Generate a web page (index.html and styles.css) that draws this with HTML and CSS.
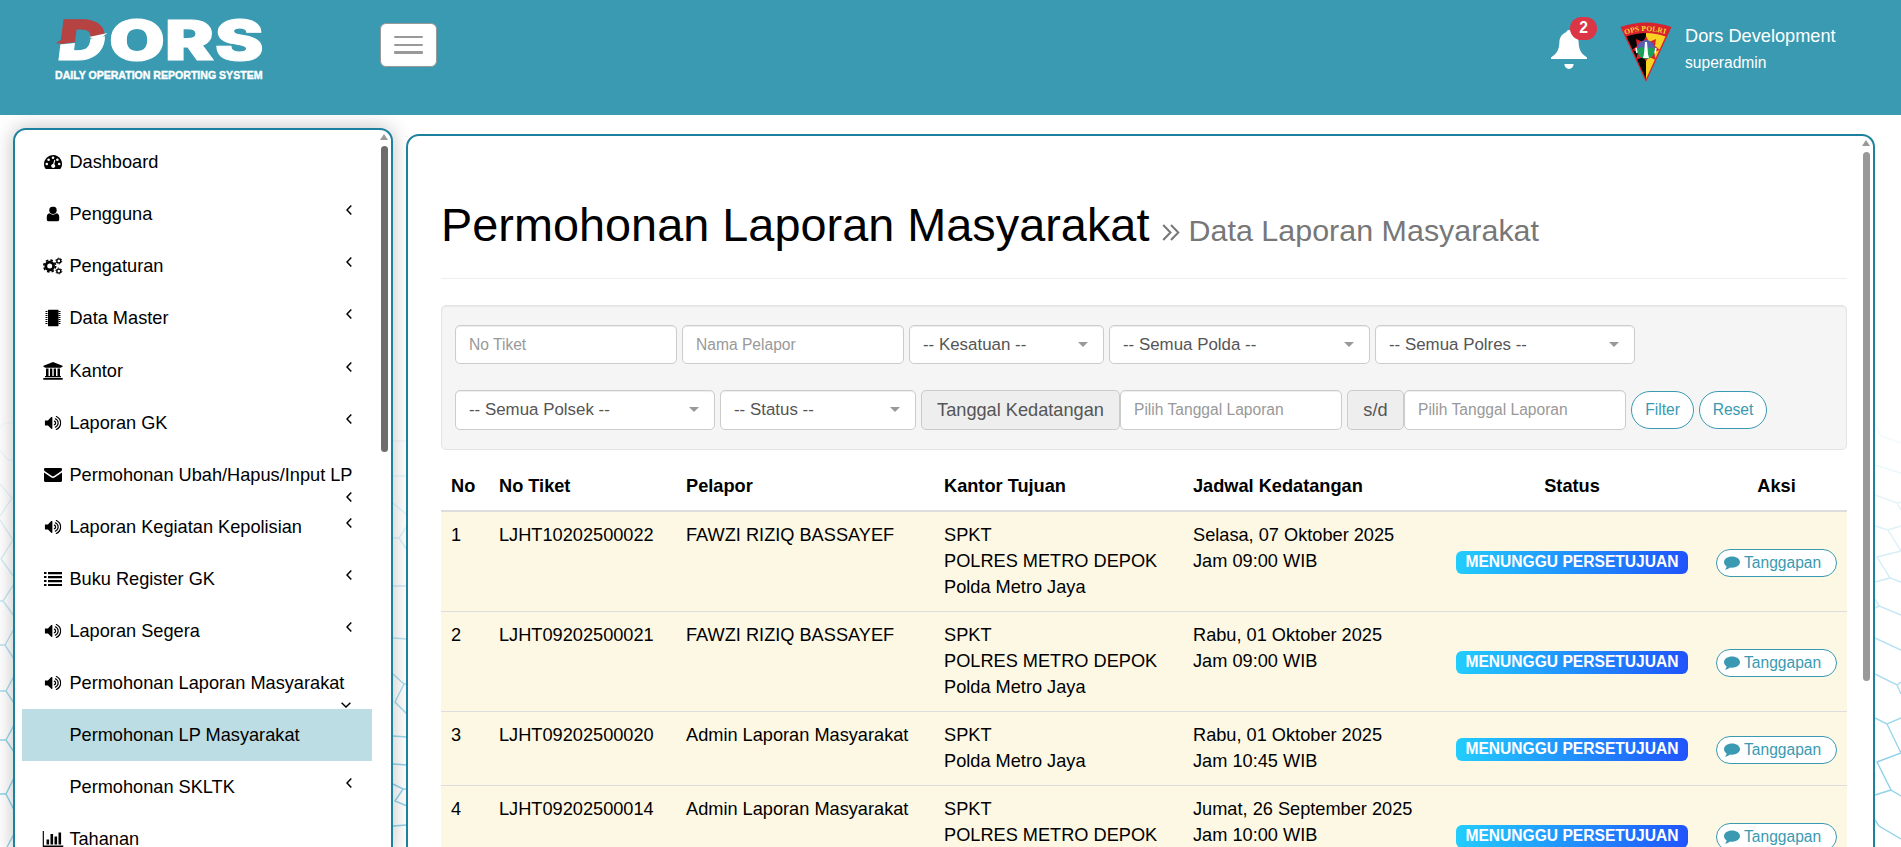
FILE: index.html
```html
<!DOCTYPE html>
<html lang="id">
<head>
<meta charset="utf-8">
<title>DORS - Permohonan Laporan Masyarakat</title>
<link rel="stylesheet" href="styles.css">
</head>
<body>
<svg width="0" height="0" class="defs">
  <symbol id="i-dash" viewBox="0 0 18 14"><path d="M9 0a9 9 0 0 0-9 9c0 1.700.5 3.300 1.300 4.600.2.300.4.400.7.400h14c.3 0 .5-.1.700-.4A9 9 0 0 0 9 0z"/><g fill="#fff"><circle cx="2.800" cy="9" r="1.300"/><circle cx="4.600" cy="4.700" r="1.300"/><circle cx="9" cy="2.800" r="1.300"/><circle cx="13.400" cy="4.700" r="1.300"/><circle cx="15.200" cy="9" r="1.300"/><path d="M10.300 4.800l1 .2-1 4.200a2 2 0 1 1-1.200-.3z"/></g></symbol>
  <symbol id="i-user" viewBox="0 0 13 15"><circle cx="6.500" cy="3.700" r="3.700"/><path d="M3 6.700c-2.200.4-3 2.500-3 5.300C0 14 1 15 2.500 15h8c1.500 0 2.500-1 2.500-3 0-2.800-.8-4.900-3-5.300-2 1.900-5 1.900-7 0z"/></symbol>
  <symbol id="i-gears" viewBox="0 0 20 17"><g fill="none" stroke="#000"><circle cx="6.700" cy="8.500" r="3.900" stroke-width="2.800"/><circle cx="6.700" cy="8.500" r="5.900" stroke-width="1.700" stroke-dasharray="2.500 2.134"/><circle cx="15.800" cy="3.400" r="2" stroke-width="1.400"/><circle cx="15.800" cy="3.400" r="3" stroke-width="1" stroke-dasharray="1.500 1.642"/><circle cx="15.800" cy="13.600" r="2" stroke-width="1.400"/><circle cx="15.800" cy="13.600" r="3" stroke-width="1" stroke-dasharray="1.500 1.642"/></g></symbol>
  <symbol id="i-book" viewBox="0 0 16 17"><rect x="3" width="10.500" height="17" rx=".8"/><path d="M.5 2h2M.5 4h2M.5 6h2M.5 8h2M.5 10h2M.5 12h2M.5 14h2M13.500 2h2M13.500 4h2M13.500 6h2M13.500 8h2M13.500 10h2M13.500 12h2M13.500 14h2" stroke="#000" stroke-width="1"/></symbol>
  <symbol id="i-bank" viewBox="0 0 20 18"><path d="M10 0l9.500 3.800V5h-1.200v.7H1.700V5H.5V3.800zM3 6.500h2.500V14H7V6.500h2.300V14h1.400V6.500H13V14h1.500V6.500H17V14h1v1.200H2V14h1zM.3 16h19.400v1.800H.3z"/></symbol>
  <symbol id="i-vol" viewBox="64 150 1664 1500"><path d="M832 352v1088q0 26-19 45t-45 19-45-19l-333-333h-262q-26 0-45-19t-19-45v-384q0-26 19-45t45-19h262l333-333q19-19 45-19t45 19 19 45zm384 544q0 76-42.500 141.500t-112.500 93.500q-10 5-25 5-26 0-45-18.500t-19-45.500q0-21 12-35.500t29-25 34-23 29-36 12-56.500-12-56.500-29-36-34-23-29-25-12-35.500q0-27 19-45.500t45-18.500q15 0 25 5 70 27 112.500 93t42.500 142zm256 0q0 153-85 282.500t-225 188.500q-13 5-25 5-27 0-46-19t-19-45q0-39 39-59 56-29 76-44 74-54 115.500-135.500t41.500-173.500-41.500-173.500-115.500-135.500q-20-15-76-44-39-20-39-59 0-26 19-45t45-19q13 0 26 5 140 59 225 188.500t85 282.500zm256 0q0 230-127 422.500t-338 283.500q-13 5-26 5-26 0-45-19t-19-45q0-36 39-59 7-4 22.500-10.500t22.500-10.500q46-25 82-51 123-91 192-227t69-289-69-289-192-227q-36-26-82-51-7-4-22.500-10.500t-22.500-10.500q-39-23-39-59 0-26 19-45t45-19q13 0 26 5 211 91 338 283.500t127 422.500z"/></symbol>
  <symbol id="i-mail" viewBox="0 0 18 14"><path d="M0 4.400l7 4.800c1.300.9 2.700.9 4 0l7-4.800V12.500c0 .9-.6 1.500-1.500 1.500h-15C.6 14 0 13.400 0 12.500zM1.200 0h15.600C17.600 0 18 .6 18 1.400c0 .9-.6 1.600-1.300 2.100L10.500 7.700c-1.100.8-1.900.8-3 0L1.300 3.500C.5 3 0 2.200 0 1.400 0 .6.400 0 1.200 0z"/></symbol>
  <symbol id="i-list" viewBox="0 0 18 14"><path d="M0 0h2.500v2H0zM4 0h14v2.300H4zM0 4h2.500v2H0zM4 4h14v2.200H4zM0 8h2.500v2H0zM4 8h14v2.200H4zM0 12h2.500v2H0zM4 12h14v2H4z"/></symbol>
  <symbol id="i-chart" viewBox="0 0 21 16"><path d="M0 0h1.400v14.500H21V16H0zM4 8.500h2.600v5H4zM8 3h2.600v10.500H8zM12 5.500h2.600v8H12zM16 1.500h2.600v12H16z"/></symbol>
  <symbol id="i-chev" viewBox="0 0 6 10"><path d="M5.300.6L1 5l4.300 4.400" fill="none" stroke="#000" stroke-width="1.500"/></symbol>
  <symbol id="i-comment" viewBox="0 0 17 14"><path d="M8.500 0C13.200 0 17 2.600 17 6s-3.800 6-8.500 6c-.7 0-1.400-.1-2-.2C5 13.200 3 13.900 1 14c1-1 1.600-2 1.800-3.400C1 9.500 0 7.900 0 6c0-3.400 3.800-6 8.500-6z"/></symbol>
</svg>

<svg class="mesh" viewBox="0 0 1901 847">
  <defs><linearGradient id="fade" gradientUnits="userSpaceOnUse" x1="0" y1="380" x2="0" y2="760"><stop offset="0" stop-color="#8fd2ea" stop-opacity="0"/><stop offset=".4" stop-color="#8fd2ea" stop-opacity=".3"/><stop offset="1" stop-color="#8fd2ea"/></linearGradient></defs>
  <path fill="none" stroke="url(#fade)" stroke-width="1.400" d="M0 428L3 424L14 422M0 450L8 460H14M0 484L12 498L0 516M0 520L13 540L1 559L14 577M14 584L3 601H0M3 601L14 616M14 629L5 645H0M5 645L14 659M14 676L6 691H0M6 691L14 703M14 725L6 740H0M6 740L14 752M14 778L6 794H0M6 794L14 810M14 834L7 847M393 441H407M393 476H407M393 503L407 515M393 538H399L407 526M399 538L407 550M393 586H407M393 638L407 639M393 674L404 684H407M404 684L395 702L407 714M393 736L407 737M393 764L407 765M393 784L403 789H407M403 789L395 801L407 806M393 826L407 825M1875 424L1881 436L1901 443M1875 465L1901 473M1875 495L1897 503L1901 502M1897 503L1901 510M1875 526L1888 530L1901 526M1888 530L1901 551L1877 557L1890 578L1901 582M1890 578L1875 582M1875 599L1879 606L1901 615M1879 606L1875 608M1875 638L1901 650M1875 674L1897 685L1901 682M1897 685L1901 694M1875 718L1887 724L1901 718M1887 724L1901 753L1877 762L1891 790L1901 796M1891 790L1875 795M1875 820L1879 826L1901 839"/>
</svg>

<header class="topbar">
  <svg class="logo" viewBox="0 0 212 70" width="212" height="70">
    <defs>
      <clipPath id="top"><path d="M-10 -5H70V20L27 25L22 29L-10 34z"/></clipPath>
      <clipPath id="bottom"><path d="M-10 33L22 30L30 27L70 20V60H-10z"/></clipPath>
    </defs>
    <g clip-path="url(#top)"><text class="wordmark red" transform="translate(3 46.500) skewX(-7)" x="0" y="0" textLength="48" lengthAdjust="spacingAndGlyphs">D</text></g>
    <g clip-path="url(#bottom)"><text class="wordmark" transform="translate(3 46.500) skewX(-7)" x="0" y="0" textLength="48" lengthAdjust="spacingAndGlyphs">D</text></g>
    <path d="M2.500 30.500L8 27L22 26L21 29z" fill="#b64242"/><path d="M36 24L54.500 20L48 25L42 26z" fill="#fff"/>
    <text class="wordmark" x="56" y="46.500" textLength="56" lengthAdjust="spacingAndGlyphs">O</text>
    <text class="wordmark" x="112" y="46.500" textLength="49" lengthAdjust="spacingAndGlyphs">R</text>
    <text class="wordmark" x="162" y="46.500" textLength="48.500" lengthAdjust="spacingAndGlyphs">S</text>
    <text class="tagline" x="2" y="65.500" textLength="207.500" lengthAdjust="spacingAndGlyphs">DAILY OPERATION REPORTING SYSTEM</text>
  </svg>
  <button class="burger" aria-label="Menu"><i></i><i></i><i></i></button>
  <div class="bell">
    <svg viewBox="0 0 36 40" width="36" height="40"><path d="M18 0c1.700 0 2.600 1 2.600 2.300 4.400 1.300 6.800 5 7 9.700.3 7 1.700 11 8.400 15.500V29H0v-1.500C6.700 23 8.100 19 8.400 12c.2-4.700 2.600-8.400 7-9.700C15.400 1 16.300 0 18 0zM13.400 34h9.200a4.600 5 0 0 1-9.200 0z" fill="#fff"/></svg>
    <span class="count">2</span>
  </div>
  <svg class="emblem" viewBox="0 0 52 60" width="52" height="60">
    <defs><path id="arc" d="M5 12.500Q26 5.500 47 12.500"/></defs>
    <path d="M.5 5Q26-4 51.500 5L26 60z" fill="#d8232e"/>
    <path d="M6.500 14.500Q16 11 26 11V57z" fill="#050505"/><path d="M45.500 14.500Q36 11 26 11V57z" fill="#f8d322"/>
    <text class="emblem-text"><textPath href="#arc" textLength="41">OPS POLRI</textPath></text>
    <path d="M26 14l3 6 7-3-1 7 5 4-6 2 2 8-7-3-3 4-3-4-7 3 2-8-6-2 5-4-1-7 7 3z" fill="#d8232e"/>
    <circle cx="26" cy="28" r="9" fill="#19a05a"/><path d="M17 27a9 9 0 0 1 18 0l-4-2-5 2-5-2z" fill="#5560b4"/>
    <path d="M25 20h2l1 12 1 4h-6l1-4z" fill="#fff"/><path d="M16 26l1 5M36 26l-1 5" stroke="#fff" stroke-width="1.500"/>
  </svg>
  <div class="who"><div class="name">Dors Development</div><div class="role">superadmin</div></div>
</header>

<div class="shell">
  <aside class="sidebar">
    <nav class="menu">
      <a class="item"><svg class="ic" width="18" height="14"><use href="#i-dash"/></svg>Dashboard</a>
      <a class="item"><svg class="ic" width="13" height="15"><use href="#i-user"/></svg>Pengguna<svg class="chev"><use href="#i-chev"/></svg></a>
      <a class="item"><svg class="ic" width="20" height="17"><use href="#i-gears"/></svg>Pengaturan<svg class="chev"><use href="#i-chev"/></svg></a>
      <a class="item"><svg class="ic" width="16" height="17"><use href="#i-book"/></svg>Data Master<svg class="chev"><use href="#i-chev"/></svg></a>
      <a class="item tall"><svg class="ic" width="20" height="18"><use href="#i-bank"/></svg>Kantor<svg class="chev"><use href="#i-chev"/></svg></a>
      <a class="item"><svg class="ic" width="17" height="15"><use href="#i-vol"/></svg>Laporan GK<svg class="chev"><use href="#i-chev"/></svg></a>
      <a class="item"><svg class="ic" width="18" height="14"><use href="#i-mail"/></svg>Permohonan Ubah/Hapus/Input LP<svg class="chev low"><use href="#i-chev"/></svg></a>
      <a class="item"><svg class="ic" width="17" height="15"><use href="#i-vol"/></svg>Laporan Kegiatan Kepolisian<svg class="chev"><use href="#i-chev"/></svg></a>
      <a class="item"><svg class="ic" width="18" height="14"><use href="#i-list"/></svg>Buku Register GK<svg class="chev"><use href="#i-chev"/></svg></a>
      <a class="item"><svg class="ic" width="17" height="15"><use href="#i-vol"/></svg>Laporan Segera<svg class="chev"><use href="#i-chev"/></svg></a>
      <a class="item"><svg class="ic" width="17" height="15"><use href="#i-vol"/></svg>Permohonan Laporan Masyarakat<svg class="chev low open"><use href="#i-chev"/></svg></a>
      <a class="item sub active">Permohonan LP Masyarakat</a>
      <a class="item sub">Permohonan SKLTK<svg class="chev"><use href="#i-chev"/></svg></a>
      <a class="item"><svg class="ic" width="21" height="16"><use href="#i-chart"/></svg>Tahanan</a>
    </nav>
    <div class="scroll"><b></b><i class="side-thumb"></i></div>
  </aside>

  <main class="panel">
    <div class="content">
      <h1>Permohonan Laporan Masyarakat <small><svg width="18" height="17" viewBox="0 0 18 17"><path d="M1.200 1l7.300 7.500L1.200 16M9 1l7.300 7.500L9 16" fill="none" stroke="#777" stroke-width="2"/></svg>Data Laporan Masyarakat</small></h1>
      <form class="filters">
        <div class="line">
          <span class="field text">No Tiket</span><span class="field text">Nama Pelapor</span>
          <span class="field select w195">-- Kesatuan --</span><span class="field select w261">-- Semua Polda --</span><span class="field select w260">-- Semua Polres --</span>
        </div>
        <div class="line second">
          <span class="field select w260">-- Semua Polsek --</span><span class="field select w196">-- Status --</span>
          <span class="group"><span class="addon w199">Tanggal Kedatangan</span><span class="field text">Pilih Tanggal Laporan</span></span>
          <span class="group"><span class="addon w57">s/d</span><span class="field text">Pilih Tanggal Laporan</span></span>
          <span class="pill w63">Filter</span><span class="pill w68">Reset</span>
        </div>
      </form>
      <table>
        <colgroup><col class="c1"><col class="c2"><col class="c3"><col class="c4"><col class="c5"><col class="c6"><col class="c7"></colgroup>
        <thead><tr><th>No</th><th>No Tiket</th><th>Pelapor</th><th>Kantor Tujuan</th><th>Jadwal Kedatangan</th><th class="mid">Status</th><th class="mid">Aksi</th></tr></thead>
        <tbody>
          <tr><td>1</td><td>LJHT10202500022</td><td>FAWZI RIZIQ BASSAYEF</td><td>SPKT<br>POLRES METRO DEPOK<br>Polda Metro Jaya</td><td>Selasa, 07 Oktober 2025<br>Jam 09:00 WIB</td><td class="mid"><span class="badge">MENUNGGU PERSETUJUAN</span></td><td class="mid"><span class="reply"><svg width="16" height="14"><use href="#i-comment"/></svg>Tanggapan</span></td></tr>
          <tr><td>2</td><td>LJHT09202500021</td><td>FAWZI RIZIQ BASSAYEF</td><td>SPKT<br>POLRES METRO DEPOK<br>Polda Metro Jaya</td><td>Rabu, 01 Oktober 2025<br>Jam 09:00 WIB</td><td class="mid"><span class="badge">MENUNGGU PERSETUJUAN</span></td><td class="mid"><span class="reply"><svg width="16" height="14"><use href="#i-comment"/></svg>Tanggapan</span></td></tr>
          <tr><td>3</td><td>LJHT09202500020</td><td>Admin Laporan Masyarakat</td><td>SPKT<br>Polda Metro Jaya</td><td>Rabu, 01 Oktober 2025<br>Jam 10:45 WIB</td><td class="mid"><span class="badge">MENUNGGU PERSETUJUAN</span></td><td class="mid"><span class="reply"><svg width="16" height="14"><use href="#i-comment"/></svg>Tanggapan</span></td></tr>
          <tr><td>4</td><td>LJHT09202500014</td><td>Admin Laporan Masyarakat</td><td>SPKT<br>POLRES METRO DEPOK<br>&nbsp;</td><td>Jumat, 26 September 2025<br>Jam 10:00 WIB</td><td class="mid"><span class="badge">MENUNGGU PERSETUJUAN</span></td><td class="mid"><span class="reply"><svg width="16" height="14"><use href="#i-comment"/></svg>Tanggapan</span></td></tr>
        </tbody>
      </table>
    </div>
    <div class="scroll light"><b></b><i class="main-thumb"></i></div>
  </main>
</div>
</body>
</html>
```
FILE: styles.css
```css
* { box-sizing: border-box; }
body {
  margin: 0;
  height: 847px;
  overflow: hidden;
  position: relative;
  display: flex;
  flex-direction: column;
  background: #fff;
  color: #000;
  font: 18.2px/26px "Liberation Sans", Arial, sans-serif;
}
.defs, .mesh { position: absolute; left: 0; top: 0; }
.mesh { width: 1901px; height: 847px; }

/* Top bar */
.topbar {
  position: relative;
  z-index: 2;
  flex: none;
  height: 115px;
  background: #399ab2;
  display: flex;
  align-items: flex-start;
  padding-left: 53px;
}
.logo { margin-top: 13px; display: block; overflow: visible; }
.wordmark { font: 900 55.5px Inter, sans-serif; fill: #fff; stroke: #fff; stroke-width: 1; }
.wordmark.red { fill: #b64242; stroke: #b64242; }
.tagline { font: bold 10.5px "Liberation Sans", Arial, sans-serif; fill: #fff; stroke: #fff; stroke-width: .4; }
.burger {
  display: block;
  margin: 23px 0 0 115px;
  width: 57px;
  height: 44px;
  padding: 0 13px 1px;
  border: 1px solid #999;
  border-radius: 6px;
  background: #fff;
}
.burger i { display: block; height: 2px; margin-bottom: 6px; border-radius: 1px; background: #999; }
.burger i:last-child { height: 3px; margin: -1px 0 0; }
.bell { position: relative; margin: 30px 0 0 1114px; width: 36px; }
.bell svg { display: block; }
.count {
  position: absolute;
  left: 19px;
  top: -13px;
  width: 27px;
  height: 23px;
  border-radius: 12px;
  background: #dc3545;
  color: #fff;
  font-weight: bold;
  font-size: 15.6px;
  line-height: 21px;
  text-align: center;
}
.emblem { margin: 22px 0 0 33px; }
.emblem-text { font: bold 7.5px "Liberation Serif", serif; fill: #f3dc2f; }
.who { margin: 23px 0 0 13px; color: #fff; }
.role { font-size: 15.6px; margin-top: 1px; }

/* Two-column shell */
.shell { position: relative; flex: 1; display: flex; align-items: flex-start; gap: 13px; padding: 13px 0 0 13px; }
.sidebar, .panel { display: flex; flex: none; border: 2px solid #1c819e; background: #fff; border-bottom: 0; overflow: hidden; }
.sidebar { width: 380px; height: 725px; padding-left: 7px; border-radius: 13px 13px 0 0; box-shadow: 0 0 20px rgba(0, 0, 0, .25); }
.panel { width: 1469px; height: 719px; margin-top: 6px; border-radius: 13px 13px 0 0; }

.menu { width: 350px; padding-top: 6px; flex: none; }
.item { position: relative; display: block; height: 52px; padding-left: 47.4px; line-height: 52px; white-space: nowrap; }
.tall { margin-top: 1px; }
.active { background: #bcdde3; }
.ic { position: absolute; left: 30.5px; top: 26px; transform: translate(-50%, -50%); }
.chev { position: absolute; right: 20px; top: 17px; width: 6px; height: 10px; }
.chev.low { top: 43px; }
.chev.open { transform: rotate(-90deg); right: 23px; top: 43px; }

.scroll { margin-left: 6.500px; padding-top: 4px; width: 11px; display: flex; flex-direction: column; align-items: center; color: #6d6d6d; }
.scroll b { border: 4px solid transparent; border-top: 0; border-bottom: 6px solid #999; }
.scroll i { width: 7px; margin-top: 6px; border-radius: 4px; background: currentColor; }
.light { color: #999; margin-left: 13.500px; }
.side-thumb { height: 306px; }
.main-thumb { height: 529px; }

/* Main content */
.content { width: 1406px; margin-left: 33px; flex: none; }
h1 {
  margin: 0 0 26px;
  height: 143px;
  padding-top: 63px;
  border-bottom: 1px solid #eee;
  font-size: 46.8px;
  line-height: 53px;
  letter-spacing: .03px;
  font-weight: normal;
  white-space: nowrap;
}
small { font-size: 30.42px; color: #777; }
small svg { margin-right: 8px; }
.filters {
  height: 145px;
  padding: 19px 13px 0;
  border: 1px solid #e3e3e3;
  border-radius: 5px;
  background: #f5f5f5;
  box-shadow: inset 0 1px 1px rgba(0, 0, 0, .05);
}
.line { display: flex; gap: 5px; }
.second { margin-top: 26px; align-items: center; }
.field, .addon { height: 39px; border: 1px solid #ccc; border-radius: 5px; white-space: nowrap; }
.second .field, .second .addon { height: 40px; }
.field { position: relative; display: block; background: #fff; padding-left: 13px; line-height: 37px; box-shadow: inset 0 1px 1px rgba(0, 0, 0, .075); }
.text { width: 222px; font-size: 15.6px; color: #999; }
.select { font-size: 16.9px; color: #555; }
.select::after { content: ""; position: absolute; right: 15px; top: 16px; border: 5px solid transparent; border-top-color: #999; border-bottom: 0; }
.group { display: flex; }
.addon { background: #eee; color: #555; line-height: 38px; text-align: center; }
.pill { height: 38px; border: 1px solid #399ab2; border-radius: 19px; background: #fff; color: #399ab2; font-size: 15.6px; line-height: 35px; text-align: center; }
.w195 { width: 195px; }
.w261 { width: 261px; }
.w260 { width: 260px; }
.w196 { width: 196px; }
.w199 { width: 199px; }
.w57 { width: 57px; }
.w63 { width: 63px; }
.w68 { width: 68px; }

/* Data table */
table { width: 1406px; table-layout: fixed; border-collapse: separate; border-spacing: 0; }
.c1 { width: 48px; }
.c2 { width: 187px; }
.c3 { width: 258px; }
.c4 { width: 249px; }
.c5 { width: 255px; }
.c6 { width: 268px; }
.c7 { width: 141px; }
th { height: 62px; padding: 12px 10px 0; border-bottom: 2px solid #ddd; text-align: left; white-space: nowrap; }
td { padding: 10px 0 11px 10px; border-bottom: 1px solid #ddd; background: #fdf8e4; vertical-align: top; white-space: nowrap; }
.mid { text-align: center; vertical-align: middle; padding-left: 0; padding-right: 0; }
.badge {
  display: block;
  width: 232px;
  height: 23px;
  margin: 3px auto 0;
  border-radius: 6px;
  background: linear-gradient(to right, #22cdfd, #2054fc);
  color: #fff;
  font-size: 15.6px;
  font-weight: bold;
  line-height: 22px;
}
.reply {
  display: flex;
  align-items: center;
  width: 121px;
  height: 28px;
  margin: 3px auto 0;
  padding-left: 7px;
  gap: 4px;
  border: 1px solid #399ab2;
  border-radius: 14px;
  background: #fff;
  color: #399ab2;
  font-size: 15.6px;
  line-height: 24px;
}
.reply svg { fill: #399ab2; }
```
